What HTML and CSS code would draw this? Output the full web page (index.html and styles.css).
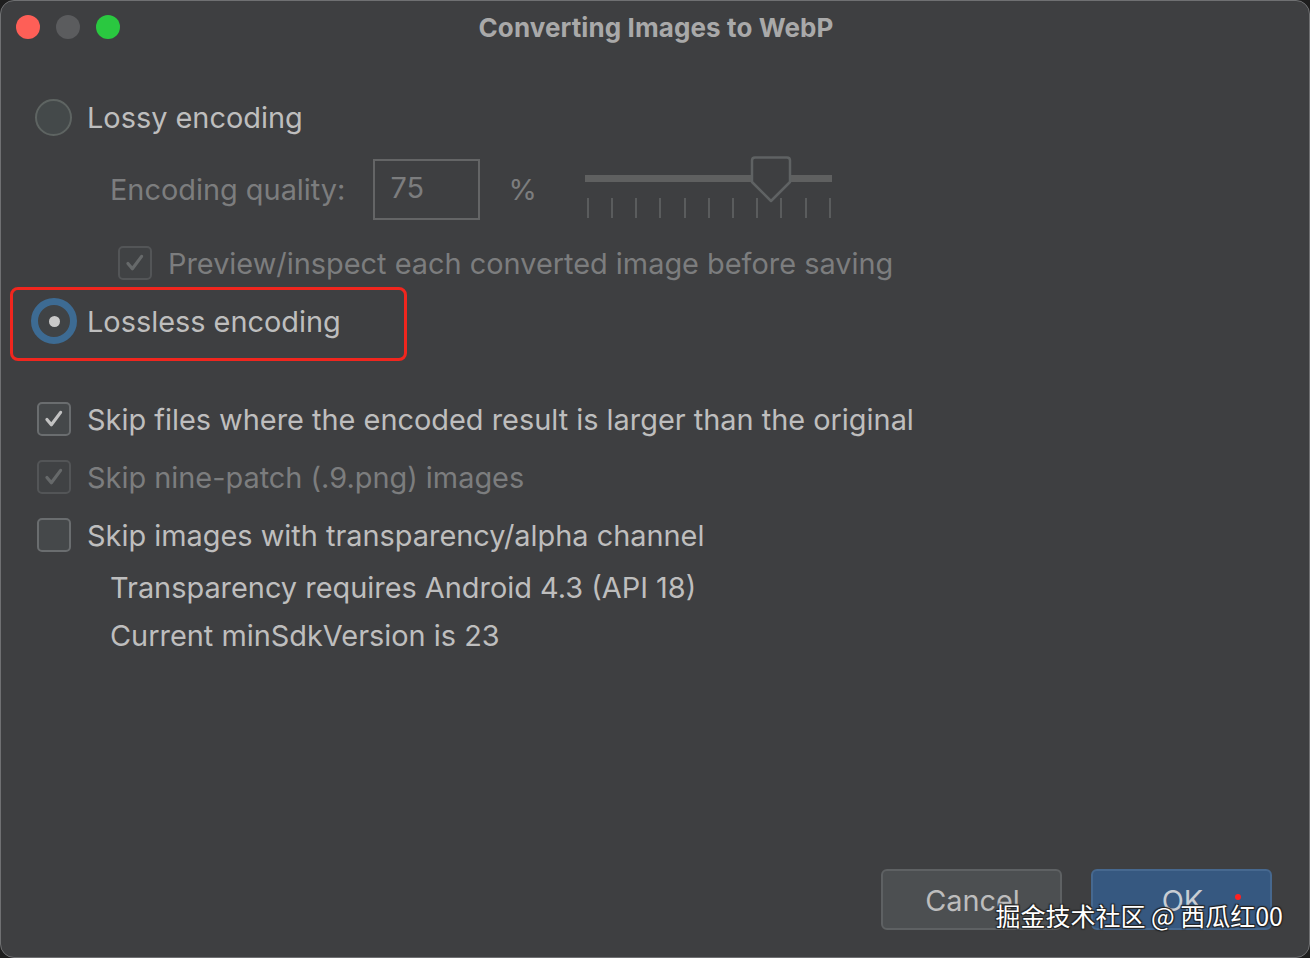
FILE: index.html
```html
<!DOCTYPE html>
<html>
<head>
<meta charset="utf-8">
<link rel="stylesheet" href="styles.css">
</head>
<body>
<div class="window">
  <div class="titlebar">
    <div class="lights">
      <span class="light red"></span>
      <span class="light grey"></span>
      <span class="light green"></span>
    </div>
    <div class="title">Converting Images to WebP</div>
  </div>
  <div class="content">
    <div class="row row-lossy">
      <span class="radio"></span>
      <span class="label">Lossy encoding</span>
    </div>
    <div class="row row-quality">
      <span class="label dim">Encoding quality:</span>
      <span class="input">75</span>
      <span class="label dim pct">%</span>
      <div class="slider">
        <div class="track"></div>
        <div class="ticks">
          <i></i><i></i><i></i><i></i><i></i><i></i><i></i><i></i><i></i><i></i><i></i>
        </div>
        <svg class="thumb" width="42" height="48" viewBox="0 0 42 48">
          <path d="M5 1.5 H37 Q40 1.5 40 4.5 V26 L21 45 L2 26 V4.5 Q2 1.5 5 1.5 Z" fill="#3e3f41" stroke="#5f6263" stroke-width="2.5" stroke-linejoin="round"/>
        </svg>
      </div>
    </div>
    <div class="row row-preview">
      <span class="check disabled"><svg viewBox="0 0 34 34"><path d="M9 17.5 L14 23.5 L24.5 9.5" fill="none" stroke="#66696a" stroke-width="3.6" stroke-linecap="round" stroke-linejoin="round"/></svg></span>
      <span class="label dim">Preview/inspect each converted image before saving</span>
    </div>
    <div class="row row-lossless">
      <span class="radio selected"><span class="dot"></span></span>
      <span class="label">Lossless encoding</span>
      <span class="highlight"></span>
    </div>
    <div class="row row-skip1">
      <span class="check"><svg viewBox="0 0 34 34"><path d="M9 17.5 L14 23.5 L24.5 9.5" fill="none" stroke="#c2c2c2" stroke-width="3.6" stroke-linecap="round" stroke-linejoin="round"/></svg></span>
      <span class="label">Skip files where the encoded result is larger than the original</span>
    </div>
    <div class="row row-skip2">
      <span class="check disabled"><svg viewBox="0 0 34 34"><path d="M9 17.5 L14 23.5 L24.5 9.5" fill="none" stroke="#66696a" stroke-width="3.6" stroke-linecap="round" stroke-linejoin="round"/></svg></span>
      <span class="label dim">Skip nine-patch (.9.png) images</span>
    </div>
    <div class="row row-skip3">
      <span class="check"></span>
      <span class="label">Skip images with transparency/alpha channel</span>
    </div>
    <div class="row row-info1">
      <span class="label">Transparency requires Android 4.3 (API 18)</span>
    </div>
    <div class="row row-info2">
      <span class="label">Current minSdkVersion is 23</span>
    </div>
  </div>
  <div class="buttons">
    <div class="btn cancel">Cancel</div>
    <div class="btn ok">OK<span class="reddot"></span></div>
  </div>
  <div class="watermark">掘金技术社区 @ 西瓜红00</div>
</div>
</body>
</html>
```

FILE: styles.css
```css
html, body {
  margin: 0;
  padding: 0;
  background: #1e1e1e;
}
body {
  width: 1310px;
  height: 958px;
  overflow: hidden;
  font-family: Inter, "Open Sans", "Liberation Sans", sans-serif;
}
.window {
  position: relative;
  box-sizing: border-box;
  width: 1310px;
  height: 958px;
  background: #3e3f41;
  border: 1px solid #6f7072;
  border-radius: 14px;
  display: flex;
  flex-direction: column;
  overflow: hidden;
}
.titlebar {
  position: relative;
  height: 53px;
  display: flex;
  align-items: center;
  justify-content: center;
  flex-shrink: 0;
}
.lights {
  position: absolute;
  left: 15px;
  top: 14px;
  display: flex;
  gap: 16px;
}
.light {
  width: 24px;
  height: 24px;
  border-radius: 50%;
  display: block;
}
.light.red { background: #fe5f57; }
.light.grey { background: #5b5c5e; }
.light.green { background: #2ac840; }
.title {
  font-weight: 700;
  font-size: 26px;
  color: #a9a9a9;
  letter-spacing: 0.1px;
  margin-left: 2px;
}
.content {
  display: flex;
  flex-direction: column;
  padding-left: 33px;
}
.row {
  position: relative;
  display: flex;
  align-items: center;
  flex-shrink: 0;
}
.label {
  font-size: 28.9px;
  color: #bebebe;
  white-space: nowrap;
}
.label.dim { color: #7c7d7e; }
.row-lossy { margin-top: 34px; height: 58px; }
.row-quality { margin-top: 11px; height: 64px; padding-left: 76px; }
.row-preview { margin-top: 19px; height: 46px; padding-left: 84px; }
.row-lossless { margin-top: 10px; height: 50px; }
.row-skip1 { margin-top: 50px; height: 46px; }
.row-skip2 { margin-top: 12px; height: 46px; }
.row-skip3 { margin-top: 12px; height: 46px; }
.row-info1 { margin-top: 8px; height: 42px; padding-left: 76px; }
.row-info2 { margin-top: 6px; height: 42px; padding-left: 76px; }

.radio {
  box-sizing: border-box;
  width: 37px;
  height: 37px;
  border-radius: 50%;
  border: 2px solid #5e6462;
  background: #44494a;
  margin-left: 1px;
  margin-right: 15px;
  display: flex;
  align-items: center;
  justify-content: center;
  flex-shrink: 0;
}
.radio.selected {
  width: 46px;
  height: 46px;
  margin-left: -3px;
  margin-right: 10px;
  border: 7px solid #3d6b93;
  background: #404345;
}
.radio .dot {
  width: 11px;
  height: 11px;
  border-radius: 50%;
  background: #c9c9c9;
}
.check {
  box-sizing: border-box;
  width: 34px;
  height: 34px;
  border: 2px solid #6a6d6f;
  border-radius: 5px;
  background: #45484a;
  margin-left: 3px;
  margin-right: 16px;
  flex-shrink: 0;
  display: block;
}
.check svg { width: 30px; height: 30px; display: block; }
.check.disabled {
  border-color: #535557;
  background: #404244;
}
.row-preview .check { margin-left: 0; margin-right: 16px; }

.input {
  box-sizing: border-box;
  width: 107px;
  height: 61px;
  margin-left: 28px;
  border: 2px solid #646566;
  font-size: 28.9px;
  color: #7c7d7e;
  padding-left: 15px;
  display: flex;
  align-items: center;
  padding-bottom: 4px;
}
.pct { margin-left: 28px; }
.slider {
  position: relative;
  width: 247px;
  height: 64px;
  margin-left: 48px;
}
.track {
  position: absolute;
  left: 0;
  right: 0;
  top: 18px;
  height: 7px;
  background: #5f6060;
}
.ticks {
  position: absolute;
  left: 2px;
  right: 1px;
  top: 41px;
  display: flex;
  justify-content: space-between;
}
.ticks i {
  display: block;
  width: 2px;
  height: 20px;
  background: #5a5c5d;
}
.thumb {
  position: absolute;
  left: 165px;
  top: -1px;
}

.highlight {
  position: absolute;
  left: -24px;
  top: -9px;
  width: 397px;
  height: 74px;
  box-sizing: border-box;
  border: 3px solid #f0261e;
  border-radius: 8px;
}

.buttons {
  margin-top: auto;
  display: flex;
  justify-content: flex-end;
  gap: 29px;
  padding: 0 37px 27px 0;
}
.btn {
  position: relative;
  box-sizing: border-box;
  width: 181px;
  height: 61px;
  border-radius: 6px;
  display: flex;
  align-items: center;
  justify-content: center;
  font-size: 28.9px;
  color: #bdbdbd;
  padding-top: 2px;
  padding-left: 2px;
}
.btn.cancel {
  background: #4c4f51;
  border: 2px solid #5e6163;
}
.btn.ok {
  background: #365880;
  border: 2px solid #46688f;
  color: #c8cdd3;
}
.reddot {
  position: absolute;
  left: 142px;
  top: 23px;
  width: 6px;
  height: 6px;
  border-radius: 50%;
  background: #ff2020;
}
.watermark {
  position: absolute;
  right: 26px;
  bottom: 24px;
  font-family: "Noto Sans CJK SC", sans-serif;
  font-size: 25px;
  color: #ffffff;
  text-shadow: 1px 1px 1px #222, -1px -1px 1px #222, 1px -1px 1px #222, -1px 1px 1px #222;
  white-space: nowrap;
}
```
